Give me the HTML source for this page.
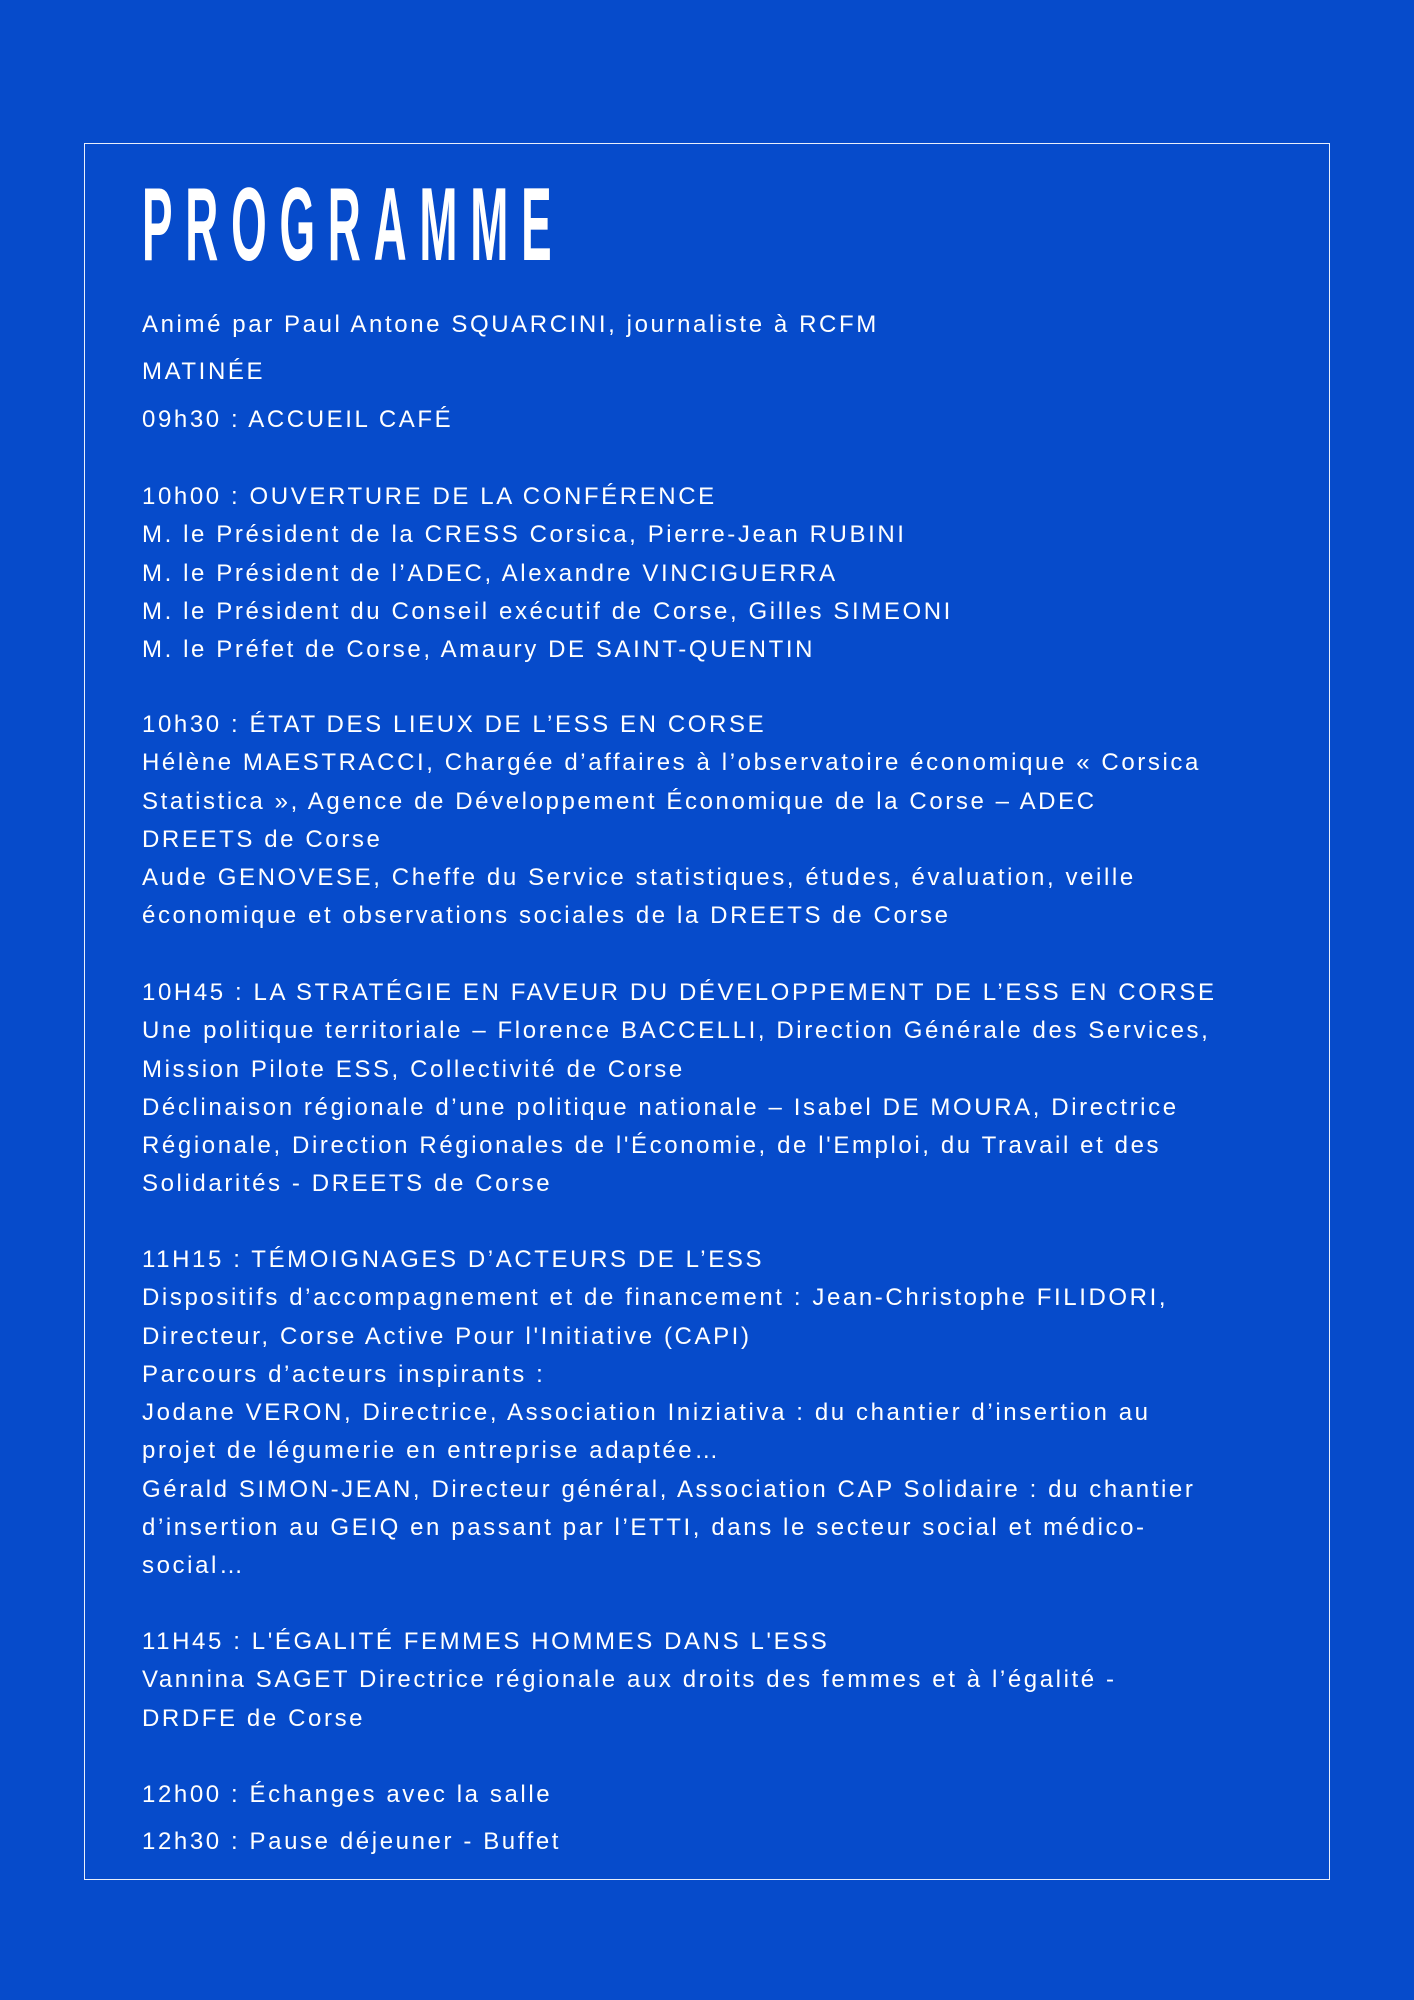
<!DOCTYPE html>
<html><head><meta charset="utf-8"><style>
html,body{margin:0;padding:0}
body{width:1414px;height:2000px;background:#064bcb;position:relative;overflow:hidden;font-family:"Liberation Sans",sans-serif;color:#fff}
.box{position:absolute;left:84px;top:143px;width:1246px;height:1737px;border:1.5px solid #e8eefc;box-sizing:border-box}
.t{position:absolute;left:142px;top:175px;font-weight:bold;font-size:104px;line-height:100px;letter-spacing:29px;transform:scaleX(0.44);transform-origin:0 0;white-space:nowrap}
.l{position:absolute;left:142px;font-size:24px;line-height:38.26px;letter-spacing:2.6px;white-space:nowrap}
</style></head><body>
<div class="box"></div>
<div class="t">PROGRAMME</div>
<div class="l" style="top:306px">Animé par Paul Antone SQUARCINI, journaliste à RCFM</div>
<div class="l" style="top:353px">MATINÉE</div>
<div class="l" style="top:401px">09h30 : ACCUEIL CAFÉ</div>
<div class="l" style="top:478px">10h00 : OUVERTURE DE LA CONFÉRENCE<br>M. le Président de la CRESS Corsica, Pierre-Jean RUBINI<br>M. le Président de l’ADEC, Alexandre VINCIGUERRA<br>M. le Président du Conseil exécutif de Corse, Gilles SIMEONI<br>M. le Préfet de Corse, Amaury DE SAINT-QUENTIN</div>
<div class="l" style="top:706px">10h30 : ÉTAT DES LIEUX DE L’ESS EN CORSE<br>Hélène MAESTRACCI, Chargée d’affaires à l’observatoire économique « Corsica<br>Statistica », Agence de Développement Économique de la Corse – ADEC<br>DREETS de Corse<br>Aude GENOVESE, Cheffe du Service statistiques, études, évaluation, veille<br>économique et observations sociales de la DREETS de Corse</div>
<div class="l" style="top:974px">10H45 : LA STRATÉGIE EN FAVEUR DU DÉVELOPPEMENT DE L’ESS EN CORSE<br>Une politique territoriale – Florence BACCELLI, Direction Générale des Services,<br>Mission Pilote ESS, Collectivité de Corse<br>Déclinaison régionale d’une politique nationale – Isabel DE MOURA, Directrice<br>Régionale, Direction Régionales de l'Économie, de l'Emploi, du Travail et des<br>Solidarités - DREETS de Corse</div>
<div class="l" style="top:1241px">11H15 : TÉMOIGNAGES D’ACTEURS DE L’ESS<br>Dispositifs d’accompagnement et de financement : Jean-Christophe FILIDORI,<br>Directeur, Corse Active Pour l'Initiative (CAPI)<br>Parcours d’acteurs inspirants :<br>Jodane VERON, Directrice, Association Iniziativa : du chantier d’insertion au<br>projet de légumerie en entreprise adaptée…<br>Gérald SIMON-JEAN, Directeur général, Association CAP Solidaire : du chantier<br>d’insertion au GEIQ en passant par l’ETTI, dans le secteur social et médico-<br>social…</div>
<div class="l" style="top:1623px">11H45 : L'ÉGALITÉ FEMMES HOMMES DANS L'ESS<br>Vannina SAGET Directrice régionale aux droits des femmes et à l’égalité -<br>DRDFE de Corse</div>
<div class="l" style="top:1776px">12h00 : Échanges avec la salle</div>
<div class="l" style="top:1823px">12h30 : Pause déjeuner - Buffet</div>
</body></html>
